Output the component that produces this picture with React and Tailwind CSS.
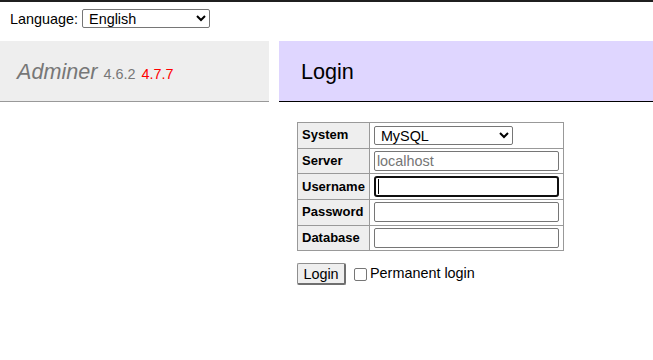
import React from "react";

const font = { fontFamily: '"Liberation Sans", Arial, sans-serif' };

function Row({ label, children }) {
  return (
    <tr className="h-[25.6px]">
      <th className="border border-[#999] bg-[#eee] px-[4px] py-[2px] text-left font-bold align-middle text-[13px] w-[72px]">{label}</th>
      <td className="border border-[#999] px-[4px] py-[2px] align-middle w-[194px]">{children}</td>
    </tr>
  );
}

export default function App() {
  return (
    <div className="min-h-[360px] w-[653px] bg-white border-t-2 border-[#1f1f1f] text-[14.4px] leading-[18px] text-black" style={font}>
      <div className="flex items-center h-[35px] pl-[10px] pb-[2px]">
        <span>Language:</span>
        <select className="ml-[4px] w-[128px] h-[19px] border border-[#767676] rounded-[2px] text-[14.4px] leading-[17px] pl-[2px] bg-white text-black" defaultValue="en" style={font}>
          <option value="en">English</option>
        </select>
      </div>
      <div className="flex mt-[4px]">
        <div className="w-[269px] h-[61px] bg-[#eee] border-b border-[#999] flex items-center pl-[17px] pt-[2px]">
          <span className="italic text-[21.6px] text-[#777]">Adminer</span>
          <span className="ml-[6px] text-[14.4px] text-[#777] mt-[4px]">4.6.2</span>
          <span className="ml-[6px] text-[14.4px] text-[#f00] mt-[4px]">4.7.7</span>
        </div>
        <div className="ml-[10px] flex-1 h-[61px] bg-[#dfd6ff] border-b border-black flex items-center pl-[22px] pt-[2px]">
          <span className="text-[21.6px] text-black">Login</span>
        </div>
      </div>
      <div className="pl-[297px] pt-[20px]">
        <table className="border-collapse w-[266px]">
          <tbody>
            <Row label="System">
              <select className="block w-[139px] h-[19px] border border-[#767676] rounded-[2px] text-[14.4px] leading-[17px] pl-[2px] bg-white text-black" defaultValue="mysql" style={font}>
                <option value="mysql">MySQL</option>
              </select>
            </Row>
            <Row label="Server">
              <input className="block w-[185px] h-[20px] border border-[#767676] rounded-[2px] px-[2px] text-[14.4px] placeholder:text-[#757575]" placeholder="localhost" style={font} />
            </Row>
            <Row label="Username">
              <div className="w-[185px] h-[21px] border-2 border-[#101010] rounded-[3px] flex items-center pl-[2px]">
                <div className="w-px h-[15px] bg-black" />
              </div>
            </Row>
            <Row label="Password">
              <input type="password" className="block w-[185px] h-[20px] border border-[#767676] rounded-[2px] px-[2px]" style={font} />
            </Row>
            <Row label="Database">
              <input className="block w-[185px] h-[20px] border border-[#767676] rounded-[2px] px-[2px]" style={font} />
            </Row>
          </tbody>
        </table>
        <div className="flex items-center mt-[12px]">
          <button className="w-[49px] h-[22px] bg-[#efefef] border border-[#8f8f8f] border-r-2 border-b-2 border-r-[#6f6f6f] border-b-[#6f6f6f] rounded-[2px] text-[14.4px] leading-[16px] text-black" style={font}>
            Login
          </button>
          <label className="flex items-center ml-[8px] -mt-[2px]">
            <span className="w-[13px] h-[13px] border border-[#767676] rounded-[2px] bg-white mt-[3px]" />
            <span className="ml-[3px]">Permanent login</span>
          </label>
        </div>
      </div>
    </div>
  );
}
